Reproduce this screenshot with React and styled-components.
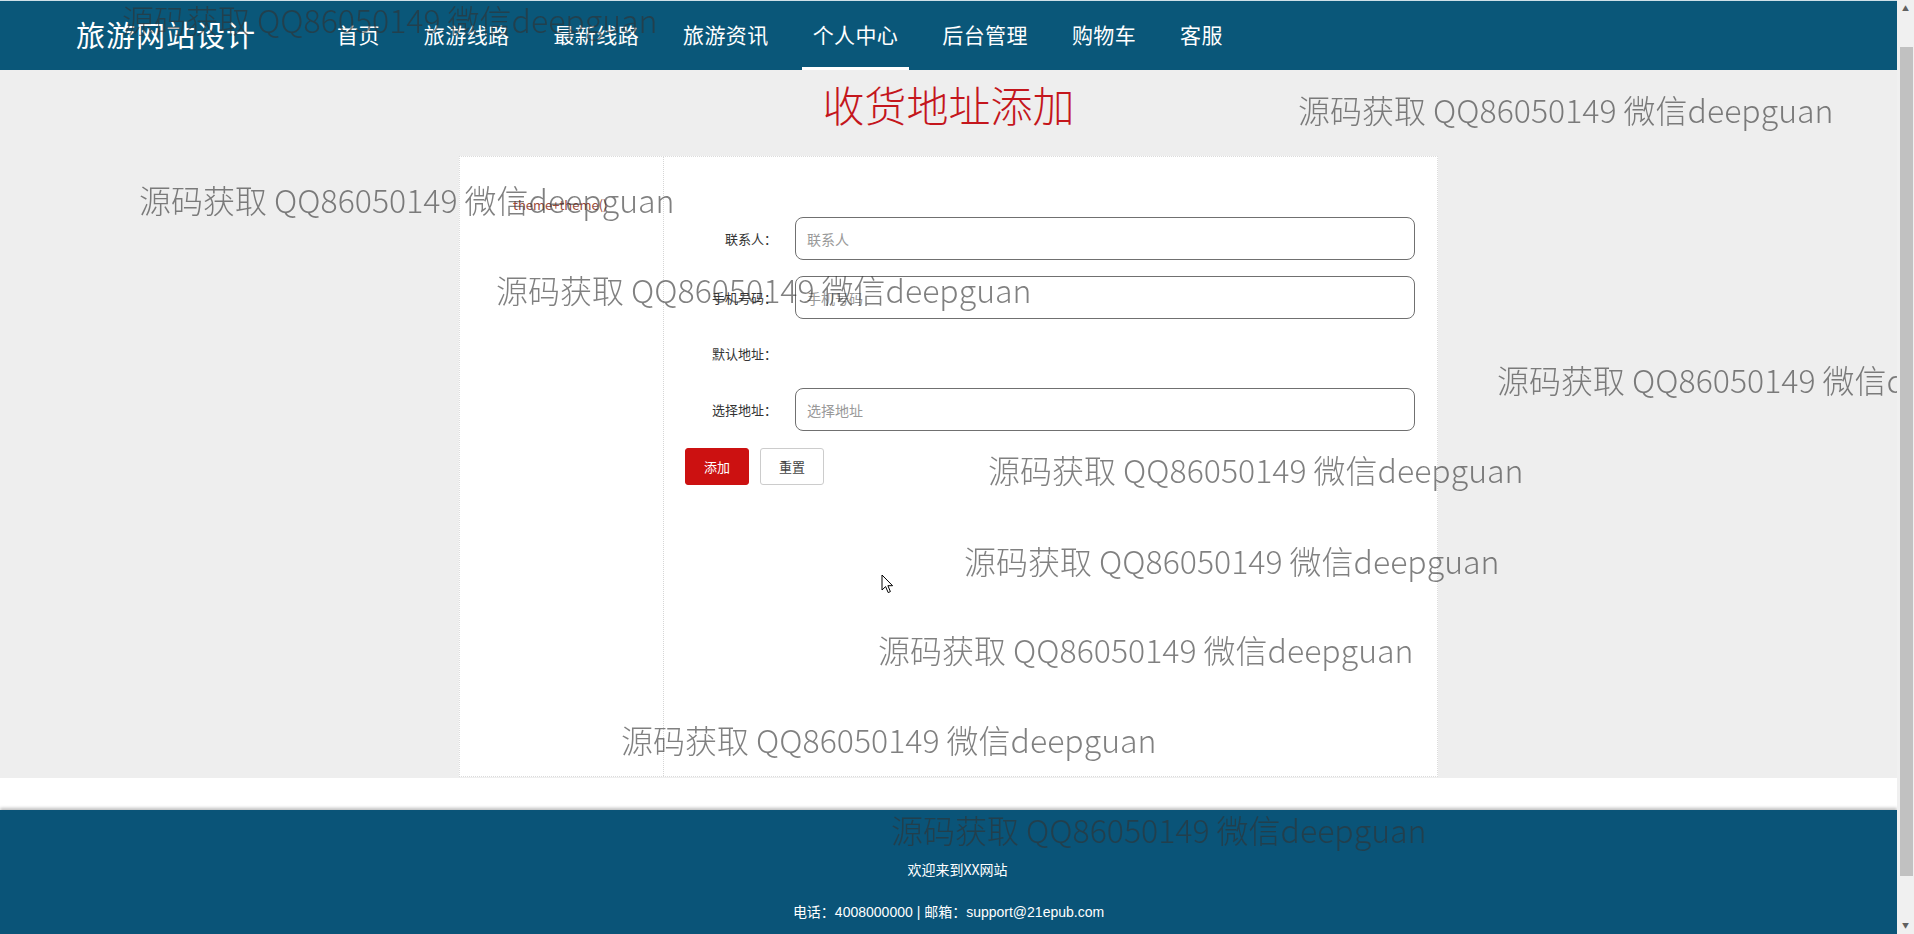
import React from 'react'
import styled, { createGlobalStyle } from 'styled-components'

const GlobalStyle = createGlobalStyle`
  html, body {
    margin: 0;
    padding: 0;
    overflow: hidden;
    background: #fff;
    font-family: "Noto Sans CJK SC", "Liberation Sans", sans-serif;
  }
`

const navItems = ['首页', '旅游线路', '最新线路', '旅游资讯', '个人中心', '后台管理', '购物车', '客服']

const marks = [
  [122, 19], [1298, 109], [139, 199], [496, 289], [1497, 379],
  [988, 469], [964, 560], [878, 649], [621, 739], [891, 829],
]

const App = () => {
  return (
    <>
      <GlobalStyle />
      <Page>
        <Header>
          <Logo>旅游网站设计</Logo>
          <Nav>
            {navItems.map((item) => (
              <NavLink key={item} $active={item === '个人中心'}>{item}</NavLink>
            ))}
          </Nav>
        </Header>

        <Main>
          <Title>收货地址添加</Title>
          <Card>
            <Side>
              <SideText>theme+theme()</SideText>
            </Side>
            <FormArea>
              <Row>
                <Label>联系人：</Label>
                <Input placeholder="联系人" />
              </Row>
              <Row>
                <Label>手机号码：</Label>
                <Input placeholder="手机号码" />
              </Row>
              <Row $plain>
                <Label>默认地址：</Label>
              </Row>
              <Row>
                <Label>选择地址：</Label>
                <Input placeholder="选择地址" />
              </Row>
              <Buttons>
                <Button $primary>添加</Button>
                <Button>重置</Button>
              </Buttons>
            </FormArea>
          </Card>
        </Main>

        <Band />

        <Footer>
          <Welcome>欢迎来到XX网站</Welcome>
          <Contact>电话：4008000000 | 邮箱：support@21epub.com</Contact>
        </Footer>
      </Page>

      <Marks>
        {marks.map(([x, y], i) => (
          <Mark key={i} style={{ left: x, top: y - 22 }}>源码获取 QQ86050149 微信deepguan</Mark>
        ))}
      </Marks>

      <Cursor width="13" height="20" viewBox="0 0 13 20">
        <path d="M1 1 L1 16 L4.6 12.6 L7.2 18.6 L9.4 17.6 L6.9 11.7 L11.6 11.7 Z" fill="#fff" stroke="#000" strokeWidth="1" strokeLinejoin="round" />
      </Cursor>

      <Scrollbar>
        <Arrow>▲</Arrow>
        <Thumb />
        <Arrow>▼</Arrow>
      </Scrollbar>
    </>
  )
}

const Page = styled.div`
  width: calc(100% - 17px);
  height: 934px;
  display: flex;
  flex-direction: column;
`

const Header = styled.header`
  height: 70px;
  box-sizing: border-box;
  border-top: 1px solid #cfe0e8;
  background: #0a5779;
  display: flex;
  align-items: stretch;
  padding-left: 76px;
`

const Logo = styled.div`
  display: flex;
  align-items: center;
  padding-bottom: 4px;
  font-size: 29px;
  letter-spacing: 1px;
  color: #fff;
  margin-right: 70px;
`

const Nav = styled.nav`
  display: flex;
  gap: 22px;
`

const NavLink = styled.a`
  display: flex;
  align-items: center;
  padding: 0 11px 4px;
  font-size: 21px;
  letter-spacing: 0.4px;
  color: #fff;
  box-shadow: ${(p) => (p.$active ? 'inset 0 -3px 0 #fff' : 'none')};
`

const Main = styled.main`
  background: #eeeeee;
  height: 708px;
  padding-top: 8px;
  box-sizing: border-box;
`

const Title = styled.h1`
  margin: 0;
  text-align: center;
  font-size: 42px;
  line-height: 52px;
  font-weight: 300;
  color: #c4161c;
`

const Card = styled.section`
  width: 979px;
  height: 621px;
  margin: 26px auto 0;
  box-sizing: border-box;
  background: #fff;
  border: 1px dotted #dcdcdc;
  display: flex;
`

const Side = styled.aside`
  width: 204px;
  box-sizing: border-box;
  border-right: 1px dotted #d6d6d6;
  padding: 34px 0 0 53px;
`

const SideText = styled.span`
  font-size: 13px;
  color: #9a4a3a;
`

const FormArea = styled.form`
  flex: 1;
  padding: 60px 22px 0 21px;
`

const Row = styled.div`
  display: flex;
  align-items: center;
  height: ${(p) => (p.$plain ? '37px' : '43px')};
  margin-bottom: 16px;
`

const Label = styled.label`
  width: 92px;
  margin-right: 18px;
  text-align: right;
  font-size: 13px;
  color: #333;
`

const Input = styled.input`
  flex: 1;
  height: 43px;
  box-sizing: border-box;
  border: 1px solid #707070;
  border-radius: 8px;
  padding: 0 11px;
  font-family: inherit;
  font-size: 14px;
  color: #333;
  outline: none;
  &::placeholder {
    color: #999;
  }
`

const Buttons = styled.div`
  display: flex;
  gap: 11px;
  padding-top: 1px;
`

const Button = styled.button`
  width: 64px;
  height: 37px;
  box-sizing: border-box;
  border-radius: 3px;
  font-family: inherit;
  font-size: 13px;
  border: 1px solid ${(p) => (p.$primary ? '#cc1111' : '#cccccc')};
  background: ${(p) => (p.$primary ? '#cc1111' : '#fff')};
  color: ${(p) => (p.$primary ? '#fff' : '#444')};
`

const Band = styled.div`
  height: 32px;
  background: #fff;
`

const Footer = styled.footer`
  flex: 1;
  background: #0a5478;
  box-shadow: 0 -2px 3px rgba(0, 0, 0, 0.25);
  padding-top: 50px;
  box-sizing: border-box;
  text-align: center;
  color: #fff;
`

const Welcome = styled.div`
  font-size: 14px;
  line-height: 18px;
  padding-left: 18px;
`

const Contact = styled.div`
  margin-top: 25px;
  font-family: "Liberation Sans", "Noto Sans CJK SC", sans-serif;
  font-size: 14px;
  line-height: 18px;
`

const Marks = styled.div`
  position: fixed;
  inset: 0;
  pointer-events: none;
  z-index: 5;
`

const Mark = styled.div`
  position: absolute;
  white-space: nowrap;
  font-size: 32px;
  line-height: 44px;
  font-weight: 300;
  color: rgba(50, 50, 50, 0.62);
`

const Cursor = styled.svg`
  position: fixed;
  left: 881px;
  top: 574px;
  z-index: 6;
`

const Scrollbar = styled.div`
  position: fixed;
  top: 0;
  right: 0;
  width: 17px;
  height: 100%;
  background: #f0f0f0;
  z-index: 10;
  display: flex;
  flex-direction: column;
  align-items: center;
`

const Arrow = styled.div`
  height: 17px;
  font-size: 7px;
  line-height: 17px;
  color: #606060;
`

const Thumb = styled.div`
  width: 13px;
  margin: 30px 0 41px 2px;
  flex: 1;
  background: #c1c1c1;
`

export default App
